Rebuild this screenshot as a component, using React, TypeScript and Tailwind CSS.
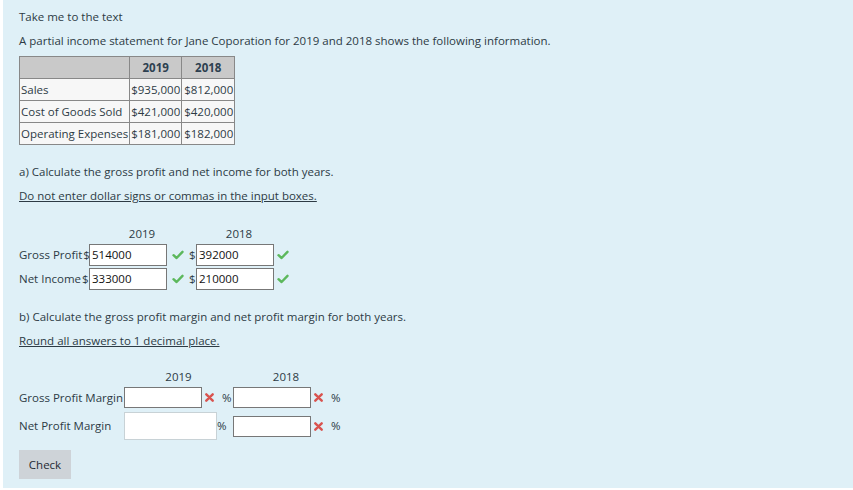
import React from 'react';

const Check = () => (
    <svg width="12" height="10" viewBox="0 0 12 10" className="shrink-0">
        <path d="M1.5 5.2 L4.6 8 L10.5 1.8" fill="none" stroke="#5cb85c" strokeWidth="2.4" strokeLinecap="round" strokeLinejoin="round" />
    </svg>
);

const Cross = () => (
    <svg width="9" height="9" viewBox="0 0 9 9" className="shrink-0">
        <path d="M1.3 1.3 L7.7 7.7 M7.7 1.3 L1.3 7.7" fill="none" stroke="#d9534f" strokeWidth="2.4" strokeLinecap="round" />
    </svg>
);

const Box = ({ value = '', w = 'w-[78px]', h = 'h-[22px]' }: { value?: string; w?: string; h?: string }) => (
    <div className={`${w} ${h} bg-white border border-[#777] flex items-center pl-[2px] text-[#111] shrink-0`}>{value}</div>
);

const rows = [
    ['Sales', '$935,000', '$812,000'],
    ['Cost of Goods Sold', '$421,000', '$420,000'],
    ['Operating Expenses', '$181,000', '$182,000'],
];

export default function App() {
    return (
        <div className="w-[853px] h-[490px] bg-white pl-[3px] pb-[2px] text-[11.5px] text-[#2d3b45]" style={{ fontFamily: '"Open Sans", "Noto Sans", sans-serif' }}>
            <div className="h-full bg-[#dff0f7] pl-[16px] pt-[9px]">
                <p className="leading-[16px]">Take me to the text</p>
                <p className="mt-[8px] leading-[16px]">A partial income statement for Jane Coporation for 2019 and 2018 shows the following information.</p>

                <table className="mt-[7px] border-collapse border border-[#888] leading-[20px]">
                    <thead>
                        <tr className="bg-[#c9c9c9] h-[22px]">
                            <th className="border border-[#888] w-[109px]"></th>
                            <th className="border border-[#888] w-[52px] font-bold text-[#2d4050]">2019</th>
                            <th className="border border-[#888] w-[53px] font-bold text-[#2d4050]">2018</th>
                        </tr>
                    </thead>
                    <tbody>
                        {rows.map(r => (
                            <tr key={r[0]} className="bg-[#f7f7f7] h-[22px]">
                                <td className="border border-[#888] px-[1px] whitespace-nowrap">{r[0]}</td>
                                <td className="border border-[#888] px-[1px] text-right">{r[1]}</td>
                                <td className="border border-[#888] px-[1px] text-right">{r[2]}</td>
                            </tr>
                        ))}
                    </tbody>
                </table>

                <p className="mt-[19px] leading-[16px]">a) Calculate the gross profit and net income for both years.</p>
                <p className="mt-[8px] leading-[16px] underline">Do not enter dollar signs or commas in the input boxes.</p>

                <div className="mt-[22px] flex leading-[16px]">
                    <div className="w-[71px]"></div>
                    <div className="w-[98px] text-center pl-[6px]">2019</div>
                    <div className="w-[102px] text-center">2018</div>
                </div>
                <div className="mt-[2px] flex flex-col gap-[2px]">
                    {[['Gross Profit', '514000', '392000'], ['Net Income', '333000', '210000']].map(r => (
                        <div key={r[0]} className="flex items-center h-[22px]">
                            <span className="w-[70px] whitespace-nowrap text-right pr-[1px]">{r[0]}<span className="ml-[1px]">$</span></span>
                            <Box value={r[1]} />
                            <span className="w-[22px] flex justify-center"><Check /></span>
                            <span className="w-[7px]">$</span>
                            <Box value={r[2]} />
                            <span className="w-[18px] flex justify-center"><Check /></span>
                        </div>
                    ))}
                </div>

                <p className="mt-[19px] leading-[16px]">b) Calculate the gross profit margin and net profit margin for both years.</p>
                <p className="mt-[8px] leading-[16px] underline">Round all answers to 1 decimal place.</p>

                <div className="mt-[20px] flex leading-[16px]">
                    <div className="w-[105px]"></div>
                    <div className="w-[109px] text-center">2019</div>
                    <div className="w-[106px] text-center">2018</div>
                </div>
                <div className="mt-[2px] flex items-center h-[21px]">
                    <span className="w-[105px] whitespace-nowrap">Gross Profit Margin</span>
                    <Box w="w-[78px]" h="h-[21px]" />
                    <span className="w-[15px] flex justify-center"><Cross /></span>
                    <span className="w-[16px] pl-[5px]">%</span>
                    <Box w="w-[78px]" h="h-[21px]" />
                    <span className="w-[14px] flex justify-center"><Cross /></span>
                    <span className="pl-[6px]">%</span>
                </div>
                <div className="mt-[4px] flex items-center h-[28px]">
                    <span className="w-[105px] whitespace-nowrap">Net Profit Margin</span>
                    <div className="w-[93px] h-[28px] bg-white border border-[#c8d2d6] shrink-0"></div>
                    <span className="w-[16px]">%</span>
                    <Box w="w-[78px]" h="h-[21px]" />
                    <span className="w-[14px] flex justify-center"><Cross /></span>
                    <span className="pl-[6px]">%</span>
                </div>

                <button className="mt-[10px] w-[52px] h-[29px] bg-[#ced3d8] text-[#1f2a33]">Check</button>
            </div>
        </div>
    );
}
